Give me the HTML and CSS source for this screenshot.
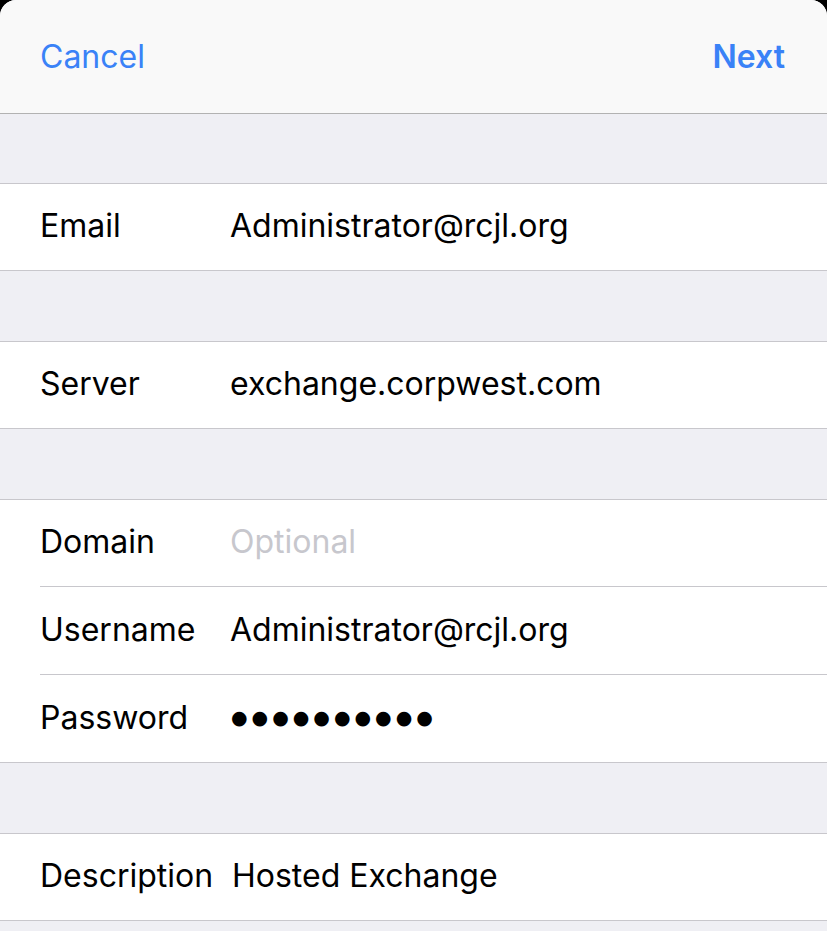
FILE: index.html
```html
<!DOCTYPE html>
<html>
<head>
<meta charset="utf-8">
<link rel="stylesheet" href="styles.css">
</head>
<body>
<div class="sheet">
  <div class="navbar">
    <span class="nav-btn">Cancel</span>
    <span class="nav-btn bold">Next</span>
  </div>
  <div class="spacer first"></div>
  <div class="group">
    <div class="row"><span class="label">Email</span><span class="value">Administrator@rcjl.org</span></div>
  </div>
  <div class="spacer"></div>
  <div class="group">
    <div class="row"><span class="label">Server</span><span class="value">exchange.corpwest.com</span></div>
  </div>
  <div class="spacer"></div>
  <div class="group">
    <div class="row"><span class="label">Domain</span><span class="value placeholder">Optional</span></div>
    <div class="row"><span class="label">Username</span><span class="value">Administrator@rcjl.org</span></div>
    <div class="row"><span class="label">Password</span><span class="value dots">●●●●●●●●●●</span></div>
  </div>
  <div class="spacer"></div>
  <div class="group">
    <div class="row"><span class="label">Description</span><span class="value desc">Hosted Exchange</span></div>
  </div>
  <div class="spacer"></div>
</div>
</body>
</html>
```
FILE: styles.css
```css
html, body {
  margin: 0;
  padding: 0;
  background: #000;
}
body {
  font-family: "Inter", "Liberation Sans", sans-serif;
  -webkit-font-smoothing: antialiased;
}
.sheet {
  background: #efeff4;
  border-radius: 16px 16px 0 0;
  overflow: hidden;
  height: 931px;
}
.navbar {
  background: #f9f9f9;
  border-bottom: 1px solid #b2b2b2;
  display: flex;
  justify-content: space-between;
  align-items: center;
  padding: 0 42px 0 40px;
  box-sizing: border-box;
  height: 114px;
}
.nav-btn {
  color: #3a82f7;
  font-size: 32px;
}
.nav-btn.bold {
  font-weight: 600;
}
.spacer {
  height: 70px;
}
.spacer.first {
  height: 69px;
}
.group {
  background: #fff;
  border-top: 1px solid #c8c7cc;
  border-bottom: 1px solid #c8c7cc;
}
.row {
  height: 86px;
  box-sizing: border-box;
  display: flex;
  align-items: center;
  padding-left: 40px;
  padding-bottom: 3px;
  font-size: 32px;
  color: #000;
}
.row + .row {
  border-top: 1px solid #c8c7cc;
  margin-left: 40px;
  padding-left: 0;
  height: 88px;
}
.label {
  width: 190px;
  flex: none;
}
.value.placeholder {
  color: #c7c7cd;
}
.value.desc {
  margin-left: 2px;
}
.dots {
  font-family: "DejaVu Sans", sans-serif;
  font-size: 19px;
  letter-spacing: 4px;
  margin-left: 1px;
}
```
